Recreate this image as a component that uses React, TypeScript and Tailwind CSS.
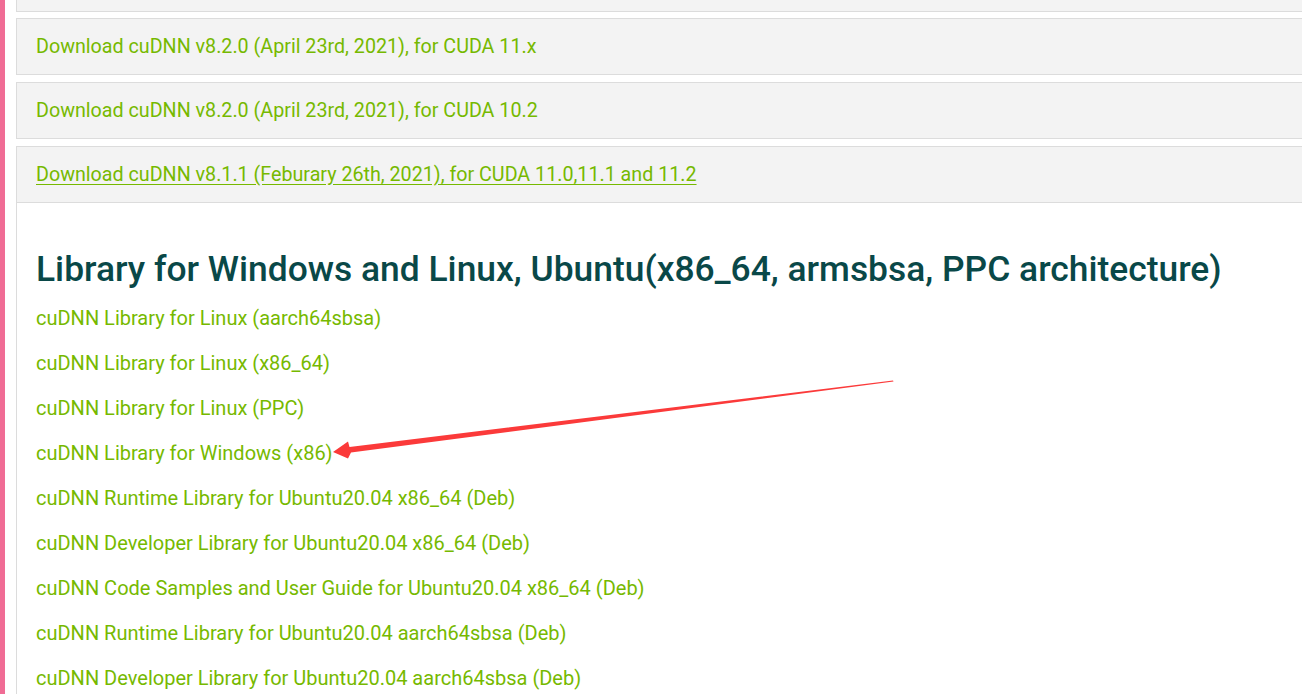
const links = [
  "cuDNN Library for Linux (aarch64sbsa)",
  "cuDNN Library for Linux (x86_64)",
  "cuDNN Library for Linux (PPC)",
  "cuDNN Library for Windows (x86)",
  "cuDNN Runtime Library for Ubuntu20.04 x86_64 (Deb)",
  "cuDNN Developer Library for Ubuntu20.04 x86_64 (Deb)",
  "cuDNN Code Samples and User Guide for Ubuntu20.04 x86_64 (Deb)",
  "cuDNN Runtime Library for Ubuntu20.04 aarch64sbsa (Deb)",
  "cuDNN Developer Library for Ubuntu20.04 aarch64sbsa (Deb)",
];

function Panel({ text }: { text: string }) {
  return (
    <div className="h-[57px] border-y border-l border-[#dcdcdc] bg-[#f3f3f3] flex items-center pl-[19px]">
      <a href="#" className="text-[19.7px] leading-[24px] text-[#76b900] no-underline">
        {text}
      </a>
    </div>
  );
}

export default function App() {
  return (
    <div
      className="relative flex h-[694px] w-[1302px] overflow-hidden bg-white"
      style={{ fontFamily: "Roboto, 'Liberation Sans', sans-serif" }}
    >
      {/* left pink edge */}
      <div className="w-[5px] shrink-0 bg-[#f06c95]" />

      <div className="flex-1 pl-[11px]">
        {/* clipped panel above */}
        <div className="h-[12px] border-b border-l border-[#dcdcdc] bg-[#f3f3f3]" />

        <div className="mt-[6px]">
          <Panel text="Download cuDNN v8.2.0 (April 23rd, 2021), for CUDA 11.x" />
        </div>
        <div className="mt-[7px]">
          <Panel text="Download cuDNN v8.2.0 (April 23rd, 2021), for CUDA 10.2" />
        </div>

        {/* open panel */}
        <div className="mt-[7px] border-l border-[#dcdcdc]">
          <div className="h-[57px] border-y border-[#dcdcdc] bg-[#f3f3f3] flex items-center pl-[19px]">
            <a
              href="#"
              className="text-[19.7px] leading-[24px] text-[#76b900] underline underline-offset-[3px]"
            >
              Download cuDNN v8.1.1 (Feburary 26th, 2021), for CUDA 11.0,11.1 and 11.2
            </a>
          </div>
          <div className="pl-[19px] pt-[46px] pb-[40px]">
            <h2 className="h-[40px] text-[35.4px] leading-[40px] font-medium text-[#094848]">
              Library for Windows and Linux, Ubuntu(x86_64, armsbsa, PPC architecture)
            </h2>
            <ul className="mt-[7px]">
              {links.map((l) => (
                <li key={l} className="h-[45px] text-[20px] leading-[45px]">
                  <a href="#" className="text-[#76b900]">
                    {l}
                  </a>
                </li>
              ))}
            </ul>
          </div>
        </div>
      </div>

      {/* red annotation arrow */}
      <svg
        className="pointer-events-none absolute left-0 top-0"
        width="1302"
        height="694"
        viewBox="0 0 1302 694"
      >
        <polygon
          points="333,452 348,441.5 349.5,447 893,380.5 893.5,381.5 351,452.5 348,458.5"
          fill="#fb3a3a"
        />
      </svg>
    </div>
  );
}
